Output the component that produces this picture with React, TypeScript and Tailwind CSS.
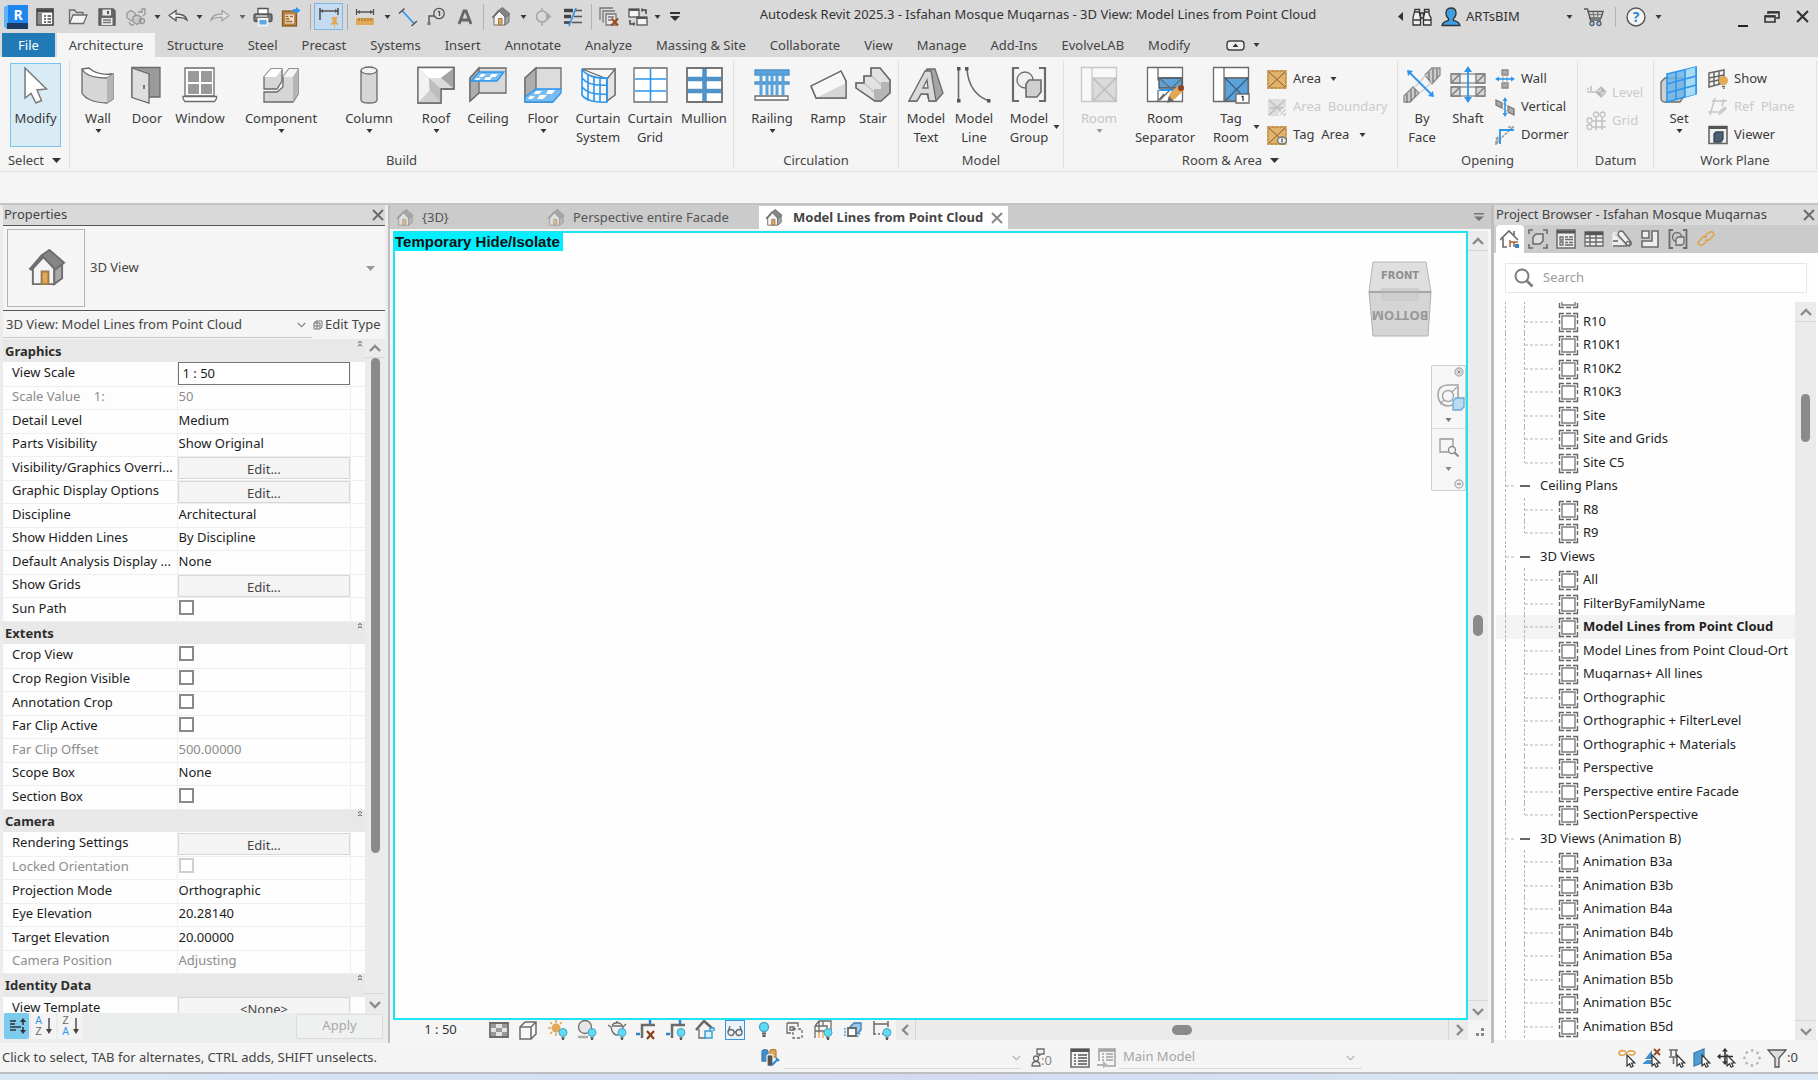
import type { ReactNode } from "react";

type IconProps = { children: ReactNode; size?: number; h?: number; className?: string };

// Small icons share a 20x20 grid, ribbon icons a 38x38 one
function Ico({ children, size = 20, h, className = "" }: IconProps) {
    return (
        <svg
            width={size}
            height={h ?? size}
            viewBox={`0 0 ${size} ${h ?? size}`}
            fill="none"
            stroke="#6b6b6b"
            strokeWidth="1.3"
            aria-hidden="true"
            className={`shrink-0 ${className}`}
        >
            {children}
        </svg>
    );
}

function Big({ children }: { children: ReactNode }) {
    return <Ico size={38}>{children}</Ico>;
}

function Caret({ className = "text-[#3a3a3a]" }: { className?: string }) {
    return (
        <svg width="7" height="4" viewBox="0 0 7 4" fill="currentColor" aria-hidden="true" className={`shrink-0 ${className}`}>
            <path d="M.5 0h6L3.5 4z" />
        </svg>
    );
}

function Chevron({ dir, className = "text-[#8a8a8a]", small = false }: { dir: "up" | "down" | "left" | "right"; className?: string; small?: boolean }) {
    const d = {
        up: "M1 9l5-5 5 5",
        down: "M1 4l5 5 5-5",
        left: "M8 1L3 6l5 5",
        right: "M4 1l5 5-5 5",
    }[dir];
    return (
        <svg width={small ? 9 : 12} height={small ? 9 : 12} viewBox="0 0 12 12" fill="none" stroke="currentColor" strokeWidth={small ? 1.6 : 2.4} aria-hidden="true" className={`shrink-0 ${className}`}>
            <path d={d} />
        </svg>
    );
}

function Cross({ size = 12, className = "text-[#6b6b6b]" }: { size?: number; className?: string }) {
    return (
        <svg width={size} height={size} viewBox="0 0 12 12" fill="none" stroke="currentColor" strokeWidth="2" aria-hidden="true" className={className}>
            <path d="M1 1l10 10M11 1L1 11" />
        </svg>
    );
}

const HouseIcon = ({ size = 20, faded = false }: { size?: number; faded?: boolean }) => (
    <svg width={size} height={size} viewBox="0 0 20 20" fill="none" stroke="#6f6f6f" strokeWidth="1" aria-hidden="true" className={faded ? "shrink-0 opacity-50" : "shrink-0"}>
        <path d="M3 10v8h11V10L8.500 4z" fill="#f4f4f4" />
        <path d="M14 10v8l4-3V8z" fill="#a8a8a8" />
        <path d="M1.500 10.500L8 3l3.500-2.500L19 7l-4.500 3.500L8 3.800z" fill="#858585" />
        <path d="M8 3.200L1.500 10.800" strokeWidth="1.600" />
        <path d="M7.500 18v-6.500H11V18z" fill="#e2a855" stroke="#9a7a4a" />
    </svg>
);

const Bulb = () => (
    <>
        <circle cx="15" cy="12.500" r="4" fill="#5fdcf2" stroke="#4aa3c4" strokeWidth="1" />
        <path d="M13.500 18h3M14 19.500h2" stroke="#555" strokeWidth="1.600" />
    </>
);

const CursorMark = () => <path d="M10 7v11l2.500-2.200 1.600 3.400 2-1-1.600-3.200h3.300z" fill="#fff" stroke="#333" strokeWidth="1.200" />;

/* ---------- title bar ---------- */

const iconTemplate = (
    <Ico>
        <rect x="2" y="2" width="16" height="16" fill="#fff" stroke="#444" strokeWidth="1.600" />
        <path d="M2 4h16" stroke="#444" strokeWidth="3" />
        <path d="M3 6h4v11H3z" fill="#8a8a8a" stroke="none" />
        <path d="M9 9h2M12.500 9H16M9 12h2M12.500 12H16M9 15h2M12.500 15H16" stroke="#444" />
    </Ico>
);
const iconOpen = (
    <Ico>
        <path d="M1.500 16.500V3h5l2 2.500H15V8" />
        <path d="M1.500 16.500L5 8h14l-3.500 8.500z" fill="#f4f4f4" />
    </Ico>
);
const iconSave = (
    <Ico>
        <path d="M2 2h14l2 2v14H2z" fill="#666" stroke="#555" />
        <path d="M5.500 2.500h8.500v6H5.500z" fill="#e9e9e9" stroke="none" />
        <path d="M11 4v3" stroke="#444" strokeWidth="1.800" />
        <path d="M4.500 11h11v7h-11z" fill="#e9e9e9" stroke="none" />
        <path d="M6 13h8M6 15.500h8" stroke="#777" />
    </Ico>
);
const iconSync = (
    <Ico className="opacity-60">
        <path d="M1 6l4-2.500L9 6v5l-4 2.500L1 11z" fill="#d0d0d0" />
        <path d="M7 10l4-2 4 2v5l-4 2.500L7 15z" fill="#bdbdbd" />
        <path d="M12 5h4V2h3v5l-2 2M3 15l2 3h3" />
        <circle cx="16" cy="14" r="2.500" />
    </Ico>
);
const iconUndo = (
    <Ico>
        <path d="M1 8.500L8 3.500V7c6 0 10 2 11 6-3-2.500-6-3-11-2.500v3.300z" fill="#f2f2f2" stroke="#555" />
    </Ico>
);
const iconRedo = (
    <Ico className="opacity-40">
        <path d="M19 8.500L12 3.500V7C6 7 2 9 1 13c3-2.500 6-3 11-2.500v3.300z" fill="#f2f2f2" stroke="#555" />
    </Ico>
);
const iconPrint = (
    <Ico>
        <path d="M5 7V1.500h10V7" fill="#fff" stroke="#555" />
        <rect x="1" y="7" width="18" height="7.500" rx="1.500" fill="#777" stroke="#555" />
        <path d="M3 9h11" stroke="#ddd" />
        <path d="M5.500 12h9v6.500h-9z" fill="#5ba9e6" stroke="#f4f4f4" strokeWidth="1.800" />
    </Ico>
);
const iconExport = (
    <Ico>
        <rect x="1.500" y="4" width="14" height="15" fill="#b98242" stroke="#8b5a22" />
        <path d="M4 7.500h9v9H4z" fill="#f3e7d3" stroke="none" />
        <path d="M4.500 9.500h3M9 9.500h3M4.500 12h4M4.500 14.500h7" stroke="#a06a2c" />
        <path d="M10 4.500c1-2 3-2.500 5-2.500V0l4.500 3.500L15 7V5c-2-.3-3.500-.3-5-.5z" fill="#2c95ee" stroke="none" />
    </Ico>
);
const iconDimPin = (
    <Ico size={22}>
        <path d="M2 2v12M20 2v7M2 5h18" stroke="#555" strokeWidth="1.600" />
        <path d="M5 3L2 5l3 2zM17 3l3 2-3 2z" fill="#555" stroke="none" />
        <path d="M13 11h7l-1.500 2v3l2.500 2.500H12l2.500-2.500v-3zM16 19h1v3h-1z" fill="#e2a855" stroke="none" />
    </Ico>
);
const iconMeasure = (
    <Ico>
        <path d="M1.500 2v6M18.500 2v6M2 5h16" stroke="#555" />
        <path d="M5 3L2 5l3 2zM15 3l3 2-3 2z" fill="#555" stroke="none" />
        <path d="M1 11h18v7H1z" fill="#e2a855" stroke="none" />
        <path d="M4 11v3M7 11v3M10 11v3M13 11v3M16 11v3" stroke="#8b6a35" strokeWidth="1" />
    </Ico>
);
const iconAlign = (
    <Ico>
        <path d="M4 3.500l12 13" stroke="#3595e8" strokeWidth="1.800" />
        <path d="M1 6.500l5.500-5M13.500 19l5.500-5" stroke="#555" strokeWidth="1.600" />
    </Ico>
);
const iconTag = (
    <Ico>
        <circle cx="13" cy="6.500" r="5.200" stroke="#555" />
        <path d="M13.500 4v5M12 5l1.500-1" stroke="#555" strokeWidth="1.400" />
        <path d="M8 9H3v7" stroke="#555" strokeWidth="1.400" />
        <rect x="1.500" y="15" width="3" height="3" fill="#777" stroke="none" />
    </Ico>
);
const iconText = (
    <Ico>
        <path d="M4 17L9 4h2l5 13M6 13h8" stroke="#666" strokeWidth="2.800" />
    </Ico>
);
const iconSection = (
    <Ico>
        <circle cx="9" cy="9.500" r="5.500" stroke="#a8a8a8" strokeWidth="1.600" />
        <path d="M13 4.500l5.500 5-5.500 5z" fill="#a8a8a8" stroke="none" />
        <path d="M9 1v3M9 15v4" stroke="#a8a8a8" strokeWidth="1.600" />
    </Ico>
);
const iconThin = (
    <Ico>
        <path d="M1 3.500h9M1 9.500h7" stroke="#444" strokeWidth="3.600" />
        <path d="M1 15.500h6" stroke="#444" strokeWidth="2.600" />
        <path d="M13 3.500h6M11 9.500h8M9 15.500h10" stroke="#555" strokeWidth="1.300" />
        <path d="M13 1L6 19" stroke="#3595e8" strokeWidth="1.800" />
    </Ico>
);
const iconCloseHidden = (
    <Ico>
        <path d="M1 13V1h13M4 15.500V4h12" stroke="#777" />
        <path d="M7 7h10v11H7z" fill="#e8e8e8" stroke="#777" />
        <path d="M9 10h6M9 13h3" stroke="#777" />
        <path d="M12.500 11.500l6.500 7M19 11.500l-6.500 7" stroke="#9c4a1f" strokeWidth="2.200" />
    </Ico>
);
const iconSwitch = (
    <Ico>
        <rect x="1" y="2" width="10" height="8" fill="#f4f4f4" stroke="#555" />
        <rect x="9" y="10" width="10" height="8" fill="#f4f4f4" stroke="#555" />
        <path d="M1 3h10M9 11h10" stroke="#555" strokeWidth="2" />
        <path d="M14 3h4v4M14 1.500v3M6 17H2v-4M6 15.500v3" stroke="#444" strokeWidth="1.500" />
    </Ico>
);

type QatItem = { icon: ReactNode; label: string; w: string };

const caret = <Caret />;

const qatLeft: QatItem[] = [
    { icon: iconTemplate, label: "Home", w: "w-[30px]" },
    { icon: iconOpen, label: "Open", w: "w-[36px]" },
    { icon: iconSave, label: "Save", w: "w-[22px]" },
    { icon: iconSync, label: "Synchronize", w: "w-[36px]" },
    { icon: caret, label: "Synchronize options", w: "w-[6px]" },
    { icon: iconUndo, label: "Undo", w: "w-[36px]" },
    { icon: caret, label: "Undo history", w: "w-[6px]" },
    { icon: iconRedo, label: "Redo", w: "w-[36px]" },
    { icon: <Caret className="text-[#666]" />, label: "Redo history", w: "w-[8px]" },
    { icon: iconPrint, label: "Print", w: "w-[34px]" },
    { icon: iconExport, label: "Export", w: "w-[22px]" },
];
const qatMiddle: QatItem[] = [
    { icon: iconMeasure, label: "Measure", w: "w-[34px]" },
    { icon: caret, label: "Measure options", w: "w-[10px]" },
    { icon: iconAlign, label: "Aligned dimension", w: "w-[32px]" },
    { icon: iconTag, label: "Tag by category", w: "w-[24px]" },
    { icon: iconText, label: "Text", w: "w-[34px]" },
];
const qatViews: QatItem[] = [
    { icon: <HouseIcon />, label: "Default 3D view", w: "w-[34px]" },
    { icon: caret, label: "3D view options", w: "w-[10px]" },
    { icon: iconSection, label: "Section", w: "w-[30px]" },
    { icon: iconThin, label: "Thin lines", w: "w-[30px]" },
];
const qatWindows: QatItem[] = [
    { icon: iconCloseHidden, label: "Close inactive views", w: "w-[34px]" },
    { icon: iconSwitch, label: "Switch windows", w: "w-[24px]" },
    { icon: caret, label: "Switch windows options", w: "w-[14px]" },
    {
        icon: (
            <svg width="10" height="9" viewBox="0 0 10 9" fill="#333" aria-hidden="true" className="shrink-0">
                <path d="M0 0h10v2H0zM0 4h10L5 9z" />
            </svg>
        ),
        label: "Customize quick access",
        w: "w-[22px]",
    },
];

function QatGroup({ items }: { items: QatItem[] }) {
    return (
        <>
            {items.map((it) => (
                <button key={it.label} type="button" aria-label={it.label} className={`flex h-8 shrink-0 items-center justify-center ${it.w}`}>
                    {it.icon}
                </button>
            ))}
        </>
    );
}

function TitleBar() {
    return (
        <header className="flex h-[33px] items-center pl-0.5">
            <button type="button" aria-label="Revit" className="flex w-[28px] shrink-0 justify-center">
                <svg width="26" height="26" viewBox="0 0 26 26" aria-hidden="true">
                    <path d="M1 3l4-2h20v24H4l-3-2z" fill="#5fb2f5" />
                    <path d="M5 1h20v18H5z" fill="#1f86f0" />
                    <path d="M4 19h21v6H4z" fill="#1b3a66" />
                    <text x="15" y="15.500" textAnchor="middle" fontSize="14" fontWeight="bold" fill="#fff" fontFamily="Open Sans, sans-serif">R</text>
                </svg>
            </button>
            <QatGroup items={qatLeft} />
            <span className="mr-[3px] ml-2 h-[26px] w-px bg-[#a9a9a9]" />
            <button type="button" aria-label="Pinned dimension" className="flex h-[27px] w-[29px] items-center justify-center border border-[#7db7e4] bg-[#c5dcf0]">
                {iconDimPin}
            </button>
            <span className="ml-1 h-[26px] w-px bg-[#a9a9a9]" />
            <QatGroup items={qatMiddle} />
            <span className="ml-px h-[26px] w-px bg-[#b3b3b3]" />
            <QatGroup items={qatViews} />
            <span className="ml-[3px] h-[26px] w-px bg-[#b3b3b3]" />
            <QatGroup items={qatWindows} />
            <h1 className="min-w-0 flex-1 pr-1 pb-1 text-center text-[13px] whitespace-nowrap text-[#333]">
                Autodesk Revit 2025.3 - Isfahan Mosque Muqarnas - 3D View: Model Lines from Point Cloud
            </h1>
            <div className="flex w-[424px] shrink-0 items-center">
                <button type="button" aria-label="Collapse search" className="flex w-3 justify-center">
                    <svg width="5" height="9" viewBox="0 0 5 9" fill="#333" aria-hidden="true"><path d="M5 0v9L0 4.500z" /></svg>
                </button>
                <button type="button" aria-label="Search" className="flex w-8 justify-center">
                    <Ico>
                        <path d="M3 2.500h4.500V7l1 3v8H1v-7zM12.500 2.500H17V7l2 4v7h-7.500v-8l1-3z" fill="#f0f0f0" stroke="#333" />
                        <path d="M8.500 6h3v5h-3zM1.500 13h7M11.500 13H19M3 5h4.500M12.500 5H17" stroke="#333" />
                    </Ico>
                </button>
                <button type="button" aria-label="Account" className="flex w-[26px] justify-center">
                    <Ico>
                        <path d="M10 1c3.500 0 5 2 5 5 0 2.500-1 4.500-2.500 5.500v1.800c4 1 6 2 6.500 5.200H1c.5-3.200 2.500-4.200 6.500-5.200v-1.800C6 10.500 5 8.500 5 6c0-3 1.500-5 5-5z" fill="#3f9fe3" stroke="#333" />
                    </Ico>
                </button>
                <button type="button" className="flex w-[109px] items-center justify-between pl-0.5 text-[13px] text-[#333]">
                    ARTsBIM
                    <Caret />
                </button>
                <button type="button" aria-label="App store" className="flex w-[42px] justify-center">
                    <Ico>
                        <path d="M0 2h3.500l3 11H17M4 4.500h15L17 11H6" fill="#f0f0f0" stroke="#555" strokeWidth="1.500" />
                        <path d="M6 7.500h12M9 4.500l1 6M14 4.500l-.5 6" stroke="#777" />
                        <circle cx="8" cy="16.500" r="2" stroke="#46617e" />
                        <circle cx="15" cy="16.500" r="2" stroke="#46617e" />
                    </Ico>
                </button>
                <span className="h-5 w-px bg-[#b3b3b3]" />
                <button type="button" aria-label="Help" className="flex w-[39px] justify-center">
                    <svg width="20" height="20" viewBox="0 0 20 20" aria-hidden="true">
                        <circle cx="10" cy="10" r="9" fill="#f4f4f4" stroke="#555" strokeWidth="1.400" />
                        <text x="10" y="15" textAnchor="middle" fontSize="14" fontWeight="bold" fill="#2b87cf" fontFamily="Open Sans, sans-serif">?</text>
                    </svg>
                </button>
                <button type="button" aria-label="Help options"><Caret /></button>
                <div className="ml-auto flex items-center">
                    <button type="button" aria-label="Minimize" className="flex h-5 w-[29px] items-end justify-center">
                        <span className="h-0.5 w-[10px] bg-[#222]" />
                    </button>
                    <button type="button" aria-label="Restore" className="flex w-[30px] justify-center">
                        <Ico size={16}>
                            <path d="M4 5V3h11v6h-3M1 7h10v6H1z" stroke="#333" strokeWidth="1.600" />
                            <path d="M4 3.500h11M1 7.500h10" stroke="#333" strokeWidth="2" />
                        </Ico>
                    </button>
                    <button type="button" aria-label="Close" className="flex w-[31px] justify-center"><Cross size={13} className="text-[#333]" /></button>
                </div>
            </div>
        </header>
    );
}

const ribbonTabs = [
    "Structure", "Steel", "Precast", "Systems", "Insert", "Annotate", "Analyze", "Massing & Site",
    "Collaborate", "View", "Manage", "Add-Ins", "EvolveLAB", "Modify",
];

function RibbonTabs() {
    return (
        <nav className="flex h-6 items-stretch pl-0.5 text-[13px] text-[#444]">
            <button type="button" className="mr-0.5 w-[53px] bg-[#1f7ab5] pt-0.5 text-white">File</button>
            <button type="button" className="w-[98px] bg-[#f5f5f5] pt-0.5">Architecture</button>
            {ribbonTabs.map((t) => (
                <button key={t} type="button" className="px-3 pt-0.5 whitespace-nowrap">{t}</button>
            ))}
            <button type="button" aria-label="Ribbon display" className="ml-6 flex items-center gap-2">
                <svg width="19" height="11" viewBox="0 0 19 11" fill="none" stroke="#444" strokeWidth="1.400" aria-hidden="true">
                    <rect x="1" y="1" width="17" height="9" rx="3" fill="#f0f0f0" />
                    <path d="M6.500 7h6l-3-3.500z" fill="#333" stroke="none" />
                </svg>
                <Caret />
            </button>
        </nav>
    );
}

/* ---------- ribbon icons ---------- */

const hatch = "#8a8a8a";

const bigIcons = {
    modify: (
        <Big><path d="M8 2l21.500 21-9.500 1 4.500 10.500-5.500 2.500-5-9.500L8 32z" fill="#fff" stroke="#7a7a7a" strokeWidth="1.500" /></Big>
    ),
    wall: (
        <Big>
            <path d="M3 3c2 5 20 7 31 5v25l-6 4C16 37 6 33 3 27z" fill="#d6d6d6" />
            <path d="M3 3l7-1c5 5 14 7 24 6l-6 4C16 12 6 9 3 3z" fill="#fff" />
            <path d="M28 12l6-4v25l-6 4z" fill="#b5b5b5" stroke="none" />
        </Big>
    ),
    door: (
        <Big>
            <path d="M4 1.500h28V31H4z" fill="#9a9a9a" />
            <path d="M4 2l17 6v29L4 31.500z" fill="#dedede" />
            <path d="M16 19v4" stroke="#555" strokeWidth="1.500" />
        </Big>
    ),
    window: (
        <Big>
            <path d="M4 2h29v28H4z" fill="#fff" />
            <path d="M7 5h11v11H7zM20 5h11v11H20zM7 18h11v10H7zM20 18h11v10H20z" fill="#999" stroke="none" />
            <path d="M2 30.500h33.500v2l-2 3H4l-2-3z" fill="#fff" />
        </Big>
    ),
    component: (
        <Big>
            <path d="M2 11l7-8h11v12l-5 8H2z" fill="#d6d6d6" />
            <path d="M9 3h11l-6 8H2z" fill="#fff" stroke="none" />
            <path d="M21 11l6-8h9v25l-5 8H2V26h13l6-5z" fill="#d6d6d6" />
            <path d="M27 3h9l-5 8H21z" fill="#f4f4f4" stroke="none" />
            <path d="M31 11l5-8v25l-5 8z" fill="#b5b5b5" stroke="none" />
        </Big>
    ),
    column: (
        <Big>
            <path d="M11 5v29c0 4 16 4 16 0V5z" fill="#d6d6d6" />
            <ellipse cx="19" cy="4.500" rx="8" ry="3.500" fill="#f2f2f2" />
        </Big>
    ),
    roof: (
        <Big>
            <path d="M1 1.500h36V23H24v14H1z" fill="#dcdcdc" />
            <path d="M1 1.500h36L24 12H12z" fill="#fff" stroke="none" />
            <path d="M37 2L24 12l13 11zM1 2l11 11v12L1 37z" fill="#f2f2f2" stroke="none" />
            <path d="M12 12l12 11v14H1l12-12z" fill="#bdbdbd" stroke="none" />
            <path d="M24 12l13-10v21z" fill="#a5a5a5" stroke="none" />
            <path d="M1 37l12-13 11 13z" fill="#cfcfcf" stroke="none" />
            <path d="M1 1.500h36V23H24v14H1z" />
        </Big>
    ),
    ceiling: (
        <Big>
            <path d="M1 12l9-10h27v25H10L1 35z" fill="#d8d8d8" />
            <path d="M1 12l9-10v25l-9 8z" fill="#adadad" />
            <path d="M2 15l8-9h25l-7 9z" fill="#7bbcf0" stroke="#2c95ee" />
            <path d="M12 8h5l-3 3h-4zM22 8h7l-3 3h-5zM7 12h5l-2 2H6zM17 11h6l-2 3h-6z" fill="#fff" stroke="none" />
        </Big>
    ),
    floor: (
        <Big>
            <path d="M1 12l11-10h25v21L28 36H1z" fill="#dcdcdc" />
            <path d="M1 12l11-10v21L1 33z" fill="#adadad" />
            <path d="M12 23h25v4l-8 9H1v-5z" fill="#7bbcf0" stroke="#2c95ee" />
            <path d="M12 25h6l-3 3h-5zM24 24h7l-3 4h-6zM6 30h5l-3 3H4zM16 29h7l-4 4h-6z" fill="#fff" stroke="none" />
        </Big>
    ),
    curtainSystem: (
        <Big>
            <path d="M3 3h33v26l-8 6V13z" fill="#f7f7f7" />
            <path d="M28 13l8-10v26l-8 6z" fill="#e3e3e3" />
            <path d="M3 3c3 6 14 10 25 9v24C16 37 6 34 3 29zM3 12c5 6 15 8 25 7M3 21c5 6 15 8 25 7M9 9v25M15 11v24M21 12v24" stroke="#2c95ee" strokeWidth="1.600" />
        </Big>
    ),
    curtainGrid: (
        <Big>
            <path d="M3 2h33v34H3z" fill="#fff" />
            <path d="M19.500 3v32M4 13h31M4 25h31" stroke="#2c95ee" strokeWidth="1.600" />
        </Big>
    ),
    mullion: (
        <Big>
            <path d="M2 2h35v34H2z" fill="#fff" />
            <path d="M19.500 2v34M3 13h33M3 25h33" stroke="#4f93c8" strokeWidth="4.500" />
            <path d="M2 2h35v34H2z" />
        </Big>
    ),
    railing: (
        <Big>
            <path d="M2 4h34v5H2zM2 16h34v2H2z" fill="#5ba3dc" stroke="#4f93c8" />
            <path d="M8 9v20M14 9v20M19 9v20M24 9v20M30 9v20" stroke="#5ba3dc" strokeWidth="3" />
            <path d="M2 30h33v4H2z" fill="#fff" />
        </Big>
    ),
    ramp: (
        <Big>
            <path d="M2 20L32 5l5 10v17H7z" fill="#f7f7f7" />
            <path d="M7 32l30-15v15z" fill="#d6d6d6" stroke="none" />
            <path d="M2 20L32 5l5 10v17H7z" />
        </Big>
    ),
    stair: (
        <Big>
            <path d="M2 17h8v-7h7V2h9l10 12v13l-9 8h-6L2 22z" fill="#e2e2e2" />
            <path d="M20 31v-8h7v-7h8v11l-9 8h-5z" fill="#b5b5b5" stroke="none" />
            <path d="M2 17h8l10 9M10 10h8l9 9M17 2h9l9 11" stroke="#c4c4c4" />
            <path d="M2 17h8v-7h7V2h9l10 12v13l-9 8h-6L2 22z" />
        </Big>
    ),
    modelText: (
        <Big>
            <path d="M2 35L20 3h8l8 24-7 8h-7l-2-7h-6l-4 7z" fill="#a5a5a5" />
            <path d="M2 35L18 5h6l5 30h-7l-1-7h-7l-4 7z" fill="#dadada" />
            <path d="M16 22l4-8 1 8z" fill="#f5f5f5" />
        </Big>
    ),
    modelLine: (
        <Big>
            <path d="M3.500 3v31M12 3c1 14 6 26 22 32" strokeWidth="1.600" />
            <path d="M2 1h3.500v3.500H2zM10 1h3.500v3.500H10zM2 33h3.500v3.500H2zM32 33h3.500v3.500H32z" fill="#555" stroke="none" />
        </Big>
    ),
    modelGroup: (
        <Big>
            <path d="M9 2H3v33h6M29 2h6v33h-6" strokeWidth="2.200" />
            <circle cx="15" cy="14" r="8" fill="#f0f0f0" />
            <path d="M16 18l3-4h12v12l-4 5H16z" fill="#cfcfcf" strokeWidth="1.600" />
        </Big>
    ),
    room: (
        <Big>
            <path d="M1.500 1.500h35v34h-35zM12 1.500v34" fill="#f8f8f8" stroke="#c8c8c8" />
            <path d="M13 12h23v23H13z" fill="#dadada" stroke="#c8c8c8" />
            <path d="M13 12l23 23M36 12L13 35" stroke="#bbb" />
        </Big>
    ),
    roomSeparator: (
        <Big>
            <path d="M1.500 1.500h35v34h-35z" fill="#fff" />
            <path d="M12 1.500v13M12 24v11M12 12h24" />
            <path d="M13 12h23v10H13z" fill="#5ba3dc" stroke="#555" />
            <path d="M13 12l16 14M36 12L14 34M12 35l6-7" />
            <path d="M13 24h17" stroke="#2c95ee" strokeWidth="2" />
            <path d="M21 36l3-9 9-8 5 5-9 9z" fill="#e2a855" stroke="none" />
            <path d="M21 37l2-7 5 5z" fill="#666" stroke="none" />
            <circle cx="35" cy="22" r="3" fill="#8b4526" stroke="none" />
        </Big>
    ),
    tagRoom: (
        <Big>
            <path d="M1.500 1.500h35v34h-35z" fill="#fff" />
            <path d="M12 1.500v34M12 12h24" />
            <path d="M13 12h23v23H13z" fill="#5ba3dc" />
            <path d="M13 12l23 23M36 12L13 35" stroke="#3f5f7e" />
            <path d="M24 28h13v9H24z" fill="#fff" />
            <path d="M31 30v5M29.500 31l1.500-1" stroke="#333" />
        </Big>
    ),
    byFace: (
        <Big>
            <path d="M1 30l9-9 6 6-9 9H1zM22 9l7-7h8v7l-8 9z" fill="#cdcdcd" stroke={hatch} />
            <path d="M4 28v9M8 24v12M12 23v8M26 6v8M30 3v13M34 3v9" stroke="#777" />
            <path d="M12 21l11-12M17 27l12-11" stroke="#ccc" />
            <path d="M7 7l22 22" stroke="#2c95ee" strokeWidth="1.800" />
            <path d="M4 4l6 1-5 5zM31 31l-6-1 5-5z" fill="#2c95ee" stroke="none" />
        </Big>
    ),
    shaft: (
        <Big>
            <path d="M2 8h34M2 17h34M2 21h34M2 30h34" stroke="#999" />
            <path d="M2 8h9v9H2zM27 8h9v9h-9zM2 21h9v9H2zM27 21h9v9h-9z" fill="#d6d6d6" stroke="#777" />
            <path d="M3 16l7-7M28 16l7-7M3 29l7-7M28 29l7-7" stroke="#777" />
            <path d="M19 5v28" stroke="#2c95ee" strokeWidth="1.800" />
            <path d="M19 0l4 6h-8zM19 37l4-6h-8z" fill="#2c95ee" stroke="none" />
        </Big>
    ),
    set: (
        <Big>
            <path d="M1 16l4-4h19v18l-4 6H5c-3 0-4-2-4-4z" fill="#cfcfcf" />
            <path d="M7 8l29-7v27L7 36z" fill="#6db4e2" fillOpacity="0.850" stroke="#2c95ee" strokeWidth="1.600" />
            <path d="M25 4l11-3v27l-11 3z" fill="#a9dcf2" stroke="none" />
            <path d="M16 6v28M25 4v28M7 18l29-8M7 27l29-8M36 1v27" stroke="#2c95ee" strokeWidth="1.600" />
        </Big>
    ),
};

const areaBase = (
    <>
        <path d="M1 2h18v17H1z" fill="#e4b36a" stroke="#c99343" />
        <path d="M2 3l16 15M18 3L2 18" stroke="#7a5c38" strokeWidth="1" />
        <path d="M1 2h18v17H1z" stroke="#b7904f" strokeDasharray="2 2" />
    </>
);

const smallIcons = {
    area: <Ico>{areaBase}</Ico>,
    areaBoundary: (
        <Ico>
            <path d="M1 2h18v17H1z" fill="#dedede" stroke="none" />
            <path d="M2 3l16 15M18 3L2 18M3 11h14" stroke="#bdbdbd" />
            <path d="M12 17l6-6 2 2-6 6z" fill="#c8c8c8" stroke="#f5f5f5" />
        </Ico>
    ),
    tagArea: (
        <Ico>
            {areaBase}
            <ellipse cx="15" cy="15.500" rx="4.500" ry="3.500" fill="#eee" stroke="#777" strokeWidth="1.500" />
            <path d="M15 13.500v4" stroke="#555" />
        </Ico>
    ),
    openingWall: (
        <Ico>
            <path d="M7 1h6v5H7zM7 14h6v5H7z" fill="#aaa" stroke="#888" />
            <path d="M8 6v8M12 6v8" stroke="#bbb" />
            <path d="M3 10h14" stroke="#2c95ee" strokeWidth="1.600" />
            <path d="M0 10l4-2.500v5zM20 10l-4-2.500v5z" fill="#2c95ee" stroke="none" />
        </Ico>
    ),
    openingVertical: (
        <Ico>
            <path d="M1 3l6 3v5L1 8zM13 9l6 3v6l-6-3z" fill="#aaa" stroke="#777" />
            <path d="M7 11l6 4M7 6l6 3" stroke="#bbb" />
            <path d="M10 3v14" stroke="#2c95ee" strokeWidth="1.600" />
            <path d="M10 0l2.500 4h-5zM10 20l2.500-4h-5z" fill="#2c95ee" stroke="none" />
        </Ico>
    ),
    dormer: (
        <Ico>
            <path d="M1 18L18 2M1 14l3-3M13 2h6M1 19v-4l4-3v4z" stroke="#999" strokeDasharray="3 1" strokeWidth="1.600" />
            <path d="M5 19V5h14" stroke="#2c95ee" strokeWidth="1.800" />
        </Ico>
    ),
    level: (
        <Ico className="opacity-70">
            <path d="M1 6h2M5 8V3M1 9h9" stroke="#aaa" strokeWidth="1.600" />
            <path d="M15 4l5 5-5 5-5-5z" fill="#ccc" stroke="#aaa" />
            <path d="M15 4v5h5zM15 14V9h-5z" fill="#999" stroke="none" />
        </Ico>
    ),
    grid: (
        <Ico>
            <path d="M10 7v12M16 7v12M6 10h14M6 16h14" stroke="#c2c2c2" strokeWidth="1.600" />
            <circle cx="10" cy="3.500" r="2.500" stroke="#c2c2c2" />
            <circle cx="16.500" cy="3.500" r="2.500" stroke="#c2c2c2" />
            <circle cx="3.500" cy="9.500" r="2.500" stroke="#c2c2c2" />
            <circle cx="3.500" cy="16" r="2.500" stroke="#c2c2c2" />
        </Ico>
    ),
    show: (
        <Ico>
            <path d="M1 4l15-3v13L1 18zM6 3v14M11 2v14M1 9l15-3M1 13l15-3" stroke="#666" strokeWidth="1.500" />
            <circle cx="15.500" cy="11.500" r="4.500" fill="#e2a855" stroke="none" />
            <path d="M14 17.500h3M15 19.500h1.500" stroke="#666" strokeWidth="1.600" />
        </Ico>
    ),
    refPlane: (
        <Ico>
            <path d="M7 1L2 18M4 4h15M16 2l-2 7M0 15h10" stroke="#c6c6c6" strokeWidth="1.500" />
            <path d="M10 18l1-4 6-5 2 3-6 5z" fill="#ccc" stroke="none" />
        </Ico>
    ),
    viewer: (
        <Ico>
            <path d="M1 1.500h18v17H1z" fill="#f0f0f0" stroke="#666" strokeWidth="1.600" />
            <path d="M1 2.500h18" stroke="#555" strokeWidth="3" />
            <path d="M6 9l2-2h7v7l-2 3H6z" fill="#4c5f73" stroke="#39485a" />
        </Ico>
    ),
};

function RibbonButton({ icon, lines, w, arrow, side, disabled }: { icon: ReactNode; lines: string[]; w: string; arrow?: boolean; side?: boolean; disabled?: boolean }) {
    return (
        <button type="button" disabled={disabled} className={`relative flex shrink-0 flex-col items-center pt-[5px] ${w} ${disabled ? "text-[#c4c4c4]" : "text-[#3a3a3a]"}`}>
            {icon}
            <span className="mt-[5px] flex flex-col text-center leading-[19px] whitespace-nowrap">
                {lines.map((l) => <span key={l}>{l}</span>)}
            </span>
            {arrow && <Caret className={disabled ? "mt-px text-[#999]" : "mt-px text-[#333]"} />}
            {side && <span className="absolute top-[64px] -right-px"><Caret /></span>}
        </button>
    );
}

function SmallButton({ icon, label, arrow, disabled }: { icon: ReactNode; label: string; arrow?: boolean; disabled?: boolean }) {
    return (
        <button type="button" disabled={disabled} className={`flex h-7 items-center gap-1.5 whitespace-pre ${disabled ? "text-[#cacaca]" : "text-[#3a3a3a]"}`}>
            {icon}
            <span>{label}</span>
            {arrow && <Caret />}
        </button>
    );
}

function Panel({ title, w, pad = "", arrow, children }: { title: string; w: string; pad?: string; arrow?: boolean; children: ReactNode }) {
    return (
        <section className={`flex shrink-0 flex-col border-r border-[#e0e0e0] ${w}`}>
            <div className={`flex h-[91px] items-start ${pad}`}>{children}</div>
            <div className="flex items-center justify-center gap-2 leading-[18px] text-[#444]">
                {title}
                {arrow && (
                    <svg width="9" height="5" viewBox="0 0 9 5" fill="#333" aria-hidden="true"><path d="M0 0h9L4.500 5z" /></svg>
                )}
            </div>
        </section>
    );
}

function Ribbon() {
    return (
        <div className="flex h-[115px] border-b border-[#e0e0e0] bg-[#f5f5f5] pt-1 pb-0.5 text-[13px]">
            <Panel title="Select" w="w-[70px]" pad="pl-[10px] pt-[2px]" arrow>
                <button type="button" className="flex h-[84px] w-[51px] flex-col items-center border border-[#7cc4ee] bg-[#d9ecf5] pt-0.5 text-[#3a3a3a]">
                    {bigIcons.modify}
                    <span className="mt-[5px] leading-[19px]">Modify</span>
                </button>
            </Panel>
            <Panel title="Build" w="w-[664px]" pad="pl-[3px]">
                <RibbonButton icon={bigIcons.wall} lines={["Wall"]} w="w-[50px]" arrow />
                <RibbonButton icon={bigIcons.door} lines={["Door"]} w="w-[48px]" />
                <RibbonButton icon={bigIcons.window} lines={["Window"]} w="w-[58px]" />
                <RibbonButton icon={bigIcons.component} lines={["Component"]} w="w-[104px]" arrow />
                <RibbonButton icon={bigIcons.column} lines={["Column"]} w="w-[72px]" arrow />
                <RibbonButton icon={bigIcons.roof} lines={["Roof"]} w="w-[62px]" arrow />
                <RibbonButton icon={bigIcons.ceiling} lines={["Ceiling"]} w="w-[42px]" />
                <RibbonButton icon={bigIcons.floor} lines={["Floor"]} w="w-[68px]" arrow />
                <RibbonButton icon={bigIcons.curtainSystem} lines={["Curtain", "System"]} w="w-[42px]" />
                <RibbonButton icon={bigIcons.curtainGrid} lines={["Curtain", "Grid"]} w="w-[62px]" />
                <RibbonButton icon={bigIcons.mullion} lines={["Mullion"]} w="w-[46px]" />
            </Panel>
            <Panel title="Circulation" w="w-[165px]" pad="pl-[11px]">
                <RibbonButton icon={bigIcons.railing} lines={["Railing"]} w="w-[54px]" arrow />
                <RibbonButton icon={bigIcons.ramp} lines={["Ramp"]} w="w-[58px]" />
                <RibbonButton icon={bigIcons.stair} lines={["Stair"]} w="w-[32px]" />
            </Panel>
            <Panel title="Model" w="w-[165px]" pad="pl-1">
                <RibbonButton icon={bigIcons.modelText} lines={["Model", "Text"]} w="w-[46px]" />
                <RibbonButton icon={bigIcons.modelLine} lines={["Model", "Line"]} w="w-[50px]" />
                <RibbonButton icon={bigIcons.modelGroup} lines={["Model", "Group"]} w="w-[60px]" side />
            </Panel>
            <Panel title="Room & Area" w="w-[334px]" pad="pl-[7px]" arrow>
                <RibbonButton icon={bigIcons.room} lines={["Room"]} w="w-[56px]" arrow disabled />
                <RibbonButton icon={bigIcons.roomSeparator} lines={["Room", "Separator"]} w="w-[76px]" />
                <RibbonButton icon={bigIcons.tagRoom} lines={["Tag", "Room"]} w="w-[56px]" side />
                <div className="ml-2 flex flex-col pt-1">
                    <SmallButton icon={smallIcons.area} label="Area " arrow />
                    <SmallButton icon={smallIcons.areaBoundary} label="Area  Boundary" disabled />
                    <SmallButton icon={smallIcons.tagArea} label="Tag  Area " arrow />
                </div>
            </Panel>
            <Panel title="Opening" w="w-[180px]" pad="pl-px">
                <RibbonButton icon={bigIcons.byFace} lines={["By", "Face"]} w="w-[46px]" />
                <RibbonButton icon={bigIcons.shaft} lines={["Shaft"]} w="w-[46px]" />
                <div className="ml-1 flex flex-col pt-1">
                    <SmallButton icon={smallIcons.openingWall} label="Wall" />
                    <SmallButton icon={smallIcons.openingVertical} label="Vertical" />
                    <SmallButton icon={smallIcons.dormer} label="Dormer" />
                </div>
            </Panel>
            <Panel title="Datum" w="w-[76px]" pad="pl-2">
                <div className="flex flex-col pt-[18px]">
                    <SmallButton icon={smallIcons.level} label="Level" disabled />
                    <SmallButton icon={smallIcons.grid} label="Grid" disabled />
                </div>
            </Panel>
            <Panel title="Work Plane" w="w-[163px]" pad="pl-1">
                <RibbonButton icon={bigIcons.set} lines={["Set"]} w="w-[42px]" arrow />
                <div className="ml-2 flex flex-col pt-1">
                    <SmallButton icon={smallIcons.show} label="Show" />
                    <SmallButton icon={smallIcons.refPlane} label="Ref  Plane" disabled />
                    <SmallButton icon={smallIcons.viewer} label="Viewer" />
                </div>
            </Panel>
        </div>
    );
}

/* ---------- properties ---------- */

type Prop =
    | { kind: "group"; name: string }
    | { kind: "text" | "edit" | "check" | "input"; name: string; value?: string; disabled?: boolean };

const props: Prop[] = [
    { kind: "group", name: "Graphics" },
    { kind: "input", name: "View Scale", value: "1 : 50" },
    { kind: "text", name: "Scale Value    1:", value: "50", disabled: true },
    { kind: "text", name: "Detail Level", value: "Medium" },
    { kind: "text", name: "Parts Visibility", value: "Show Original" },
    { kind: "edit", name: "Visibility/Graphics Overri...", value: "Edit..." },
    { kind: "edit", name: "Graphic Display Options", value: "Edit..." },
    { kind: "text", name: "Discipline", value: "Architectural" },
    { kind: "text", name: "Show Hidden Lines", value: "By Discipline" },
    { kind: "text", name: "Default Analysis Display ...", value: "None" },
    { kind: "edit", name: "Show Grids", value: "Edit..." },
    { kind: "check", name: "Sun Path" },
    { kind: "group", name: "Extents" },
    { kind: "check", name: "Crop View" },
    { kind: "check", name: "Crop Region Visible" },
    { kind: "check", name: "Annotation Crop" },
    { kind: "check", name: "Far Clip Active" },
    { kind: "text", name: "Far Clip Offset", value: "500.00000", disabled: true },
    { kind: "text", name: "Scope Box", value: "None" },
    { kind: "check", name: "Section Box" },
    { kind: "group", name: "Camera" },
    { kind: "edit", name: "Rendering Settings", value: "Edit..." },
    { kind: "check", name: "Locked Orientation", disabled: true },
    { kind: "text", name: "Projection Mode", value: "Orthographic" },
    { kind: "text", name: "Eye Elevation", value: "20.28140" },
    { kind: "text", name: "Target Elevation", value: "20.00000" },
    { kind: "text", name: "Camera Position", value: "Adjusting", disabled: true },
    { kind: "group", name: "Identity Data" },
    { kind: "edit", name: "View Template", value: "<None>" },
];

function PropRow({ p }: { p: Prop }) {
    if (p.kind === "group") {
        return (
            <tr className="bg-[#e8e8e8] odd:h-[23px] even:h-6">
                <th colSpan={3} scope="colgroup" className="p-0 pl-0.5 text-left font-bold text-[#2d2d2d]">
                    <div className="flex items-start justify-between pr-0.5">
                        <span className="leading-5">{p.name}</span>
                        <svg width="6" height="6" viewBox="0 0 6 6" fill="none" stroke="#555" aria-hidden="true"><path d="M1 2l2-1.500L5 2M1 5l2-1.500L5 5" /></svg>
                    </div>
                </th>
            </tr>
        );
    }
    const id = p.name.toLowerCase().replace(/[^a-z]+/g, "-");
    const tone = p.disabled ? "text-[#8c8c8c]" : "text-[#1c1c1c]";
    return (
        <tr className={`border-b border-[#efefef] odd:h-[23px] even:h-6 ${tone}`}>
            <td className="border-r border-[#efefef] p-0 pb-[3px] pl-[9px] whitespace-pre"><label htmlFor={id}>{p.name}</label></td>
            <td className="border-r border-[#efefef] p-0">
                {p.kind === "text" && <output id={id} className="block pb-[3px] pl-px">{p.value}</output>}
                {p.kind === "input" && <input id={id} defaultValue={p.value} className="block h-[23px] w-full border border-[#777] bg-white pb-0.5 pl-1" />}
                {p.kind === "edit" && <button id={id} type="button" className="block h-[22px] w-full border border-[#d8d8d8] bg-[#f4f4f4] pt-px leading-5 text-[#444]">{p.value}</button>}
                {p.kind === "check" && (
                    <input id={id} type="checkbox" disabled={p.disabled} className="mb-1 ml-px block size-[15px] appearance-none border-2 border-[#8a8a8a] bg-white disabled:border-[#cfcfcf]" />
                )}
            </td>
            <td className="p-0" />
        </tr>
    );
}

function Properties() {
    return (
        <aside className="flex w-[390px] shrink-0 flex-col border-r-2 border-[#bdbdbd] bg-[#ececec] pr-[3px] pl-[3px]">
            <div className="flex h-5 shrink-0 items-center justify-between bg-[#d9d9d9] pr-px pl-px text-[13px] text-[#444]">
                <h2>Properties</h2>
                <button type="button" aria-label="Close properties"><Cross /></button>
            </div>
            <button type="button" className="flex h-[86px] shrink-0 items-center border-y border-[#555] bg-[#f5f5f5] pr-2.5 pl-1 text-[13px] text-[#444]">
                <span className="mr-[5px] flex size-[78px] items-center justify-center border border-[#b5b5b5]"><HouseIcon size={39} /></span>
                3D View
                <svg width="9" height="5" viewBox="0 0 9 5" fill="#999" aria-hidden="true" className="ml-auto"><path d="M0 0h9L4.500 5z" /></svg>
            </button>
            <div className="flex h-7 shrink-0 items-center bg-[#f5f5f5] text-[13px] text-[#444]">
                <div className="flex h-[26px] w-[309px] items-center border-b border-[#c9c9c9] pr-1.5">
                    <select aria-label="View type" className="min-w-0 flex-1 appearance-none bg-transparent pl-[3px]">
                        <option>3D View: Model Lines from Point Cloud</option>
                    </select>
                    <Chevron dir="down" small />
                </div>
                <button type="button" className="ml-px flex flex-1 items-center whitespace-nowrap">
                    <svg width="10" height="10" viewBox="0 0 10 10" fill="none" stroke="#777" aria-hidden="true"><path d="M1 3l2-2h6v6l-2 2H1zM1 3h6v6M4 1v8M1 6h6" /></svg>
                    <span className="ml-0.5">Edit Type</span>
                </button>
            </div>
            <div className="flex min-h-0 flex-1">
                <div className="min-w-0 flex-1 overflow-hidden bg-[#fdfdfd]">
                    <table className="w-full table-fixed border-collapse text-[13px] leading-[18px]">
                        <colgroup>
                            <col className="w-[174px]" />
                            <col />
                            <col className="w-[14px]" />
                        </colgroup>
                        <tbody>
                            {props.map((p) => <PropRow key={p.name} p={p} />)}
                        </tbody>
                    </table>
                </div>
                <div className="flex w-5 flex-col items-center bg-[#ebebeb]">
                    <button type="button" aria-label="Scroll up" className="flex h-[19px] w-full items-center justify-center border-b border-[#d5d5d5]"><Chevron dir="up" /></button>
                    <div className="h-[73.5%] w-[9px] rounded-full bg-[#8a8a8a]" />
                    <button type="button" aria-label="Scroll down" className="mt-auto flex h-5 w-full items-center justify-center border-t border-[#d5d5d5]"><Chevron dir="down" /></button>
                </div>
            </div>
            <div className="flex h-[30px] shrink-0 items-center gap-0.5 bg-[#ebeded] pr-0.5 pb-1 pl-px">
                <button type="button" aria-label="Sort by group" className="flex h-[26px] w-[25px] items-center justify-center rounded-xs bg-[#7ccbef]">
                    <Ico><path d="M3 5h6M3 8h5M3 11h11M3 14h6M16 4v5M16 11v5" stroke="#333" strokeWidth="1.500" /><path d="M16 2l3 4h-6zM16 18l3-4h-6z" fill="#333" stroke="none" /></Ico>
                </button>
                {[["A", "Z"], ["Z", "A"]].map(([a, b]) => (
                    <button key={a} type="button" aria-label={`Sort ${a} to ${b}`} className="flex h-[26px] w-[25px] items-center justify-center gap-1 bg-[#f3f3f3]">
                        <span className="flex flex-col font-[Liberation_Sans,sans-serif] text-[10px] leading-[11px]">
                            <span className={a === "A" ? "text-[#3595e8]" : "text-[#666]"}>{a}</span>
                            <span className={b === "A" ? "text-[#3595e8]" : "text-[#666]"}>{b}</span>
                        </span>
                        <svg width="6" height="16" viewBox="0 0 6 16" stroke="#444" strokeWidth="1.400" aria-hidden="true"><path d="M3 0v12" /><path d="M0 11h6l-3 5z" fill="#444" stroke="none" /></svg>
                    </button>
                ))}
                <button type="button" disabled className="ml-auto h-[25px] w-[87px] rounded-xs border border-[#dcdcdc] bg-[#eff0f0] text-[13px] text-[#a8a8a8]">Apply</button>
            </div>
        </aside>
    );
}

/* ---------- drawing area ---------- */

const viewControls: { label: string; icon: ReactNode }[] = [
    { label: "Detail level", icon: <Ico><path d="M1 3h18v14H1z" fill="#e4e4e4" strokeWidth="1.800" /><path d="M2 4h5v4H2zM13 4h5v4h-5zM7 8h6v4H7zM2 12h5v4H2zM13 12h5v4h-5z" fill="#999" stroke="none" /></Ico> },
    { label: "Visual style", icon: <Ico><path d="M2 7l5-5h11v12l-5 5H2zM2 7h11v12M13 7l5-5" fill="#fafafa" strokeWidth="1.500" /></Ico> },
    { label: "Sun path", icon: <Ico><circle cx="8" cy="8" r="4.500" fill="#e2a855" stroke="none" /><path d="M8 0v3M0 8h3M2 2l2 2M14 2l-2 2M2 14l2-2M8 13v3" stroke="#e2a855" strokeWidth="1.600" /><Bulb /></Ico> },
    { label: "Shadows", icon: <Ico><circle cx="8" cy="7" r="6.500" fill="#e6e6e6" /><path d="M1 17h10" stroke="#aaa" strokeWidth="2.500" /><Bulb /></Ico> },
    { label: "Rendering", icon: <Ico><path d="M1 5l3 2c1 5 3 8 6 8s6-3 6-8l3-3M5 5c3-3 8-3 10 0M5 6h11M9 2h2" fill="#f4f4f4" /><Bulb /></Ico> },
    { label: "Crop view", icon: <Ico><path d="M6 18V5h13" strokeWidth="2.500" /><path d="M14 0v4M0 14h4" stroke="#2c7fd4" strokeWidth="2.500" /><path d="M11 11l7 8M18 11l-7 8" stroke="#8b3f1c" strokeWidth="2.200" /></Ico> },
    { label: "Crop region", icon: <Ico><path d="M6 18V5h13" strokeWidth="2.500" /><path d="M14 0v4M0 14h4" stroke="#2c7fd4" strokeWidth="2.500" /><Bulb /></Ico> },
    { label: "Lock 3D view", icon: <Ico><path d="M1 10l8-9 9 8" fill="none" stroke="#666" strokeWidth="2.500" /><path d="M4 9v9h7V11" /><path d="M10 11h7v7h-7zM15 11V8h4v3" fill="#d9f1fb" stroke="#3b9cd6" strokeWidth="1.500" /></Ico> },
    { label: "Temporary hide/isolate", icon: <span className="flex size-5 items-center justify-center border border-[#3f93d8] bg-[#e9f3fb]"><Ico size={18}><circle cx="5" cy="11.500" r="3" /><circle cx="13" cy="11.500" r="3" /><path d="M8 11h2M2 11l2-6M16 11l-2-6" /></Ico></span> },
    { label: "Reveal hidden", icon: <Ico><circle cx="10" cy="7" r="4.500" fill="#5fdcf2" stroke="#4aa3c4" /><path d="M8 13.500h4M8.500 16h3" stroke="#555" strokeWidth="2" /></Ico> },
    { label: "View properties", icon: <Ico><path d="M3 3h11v4M3 3v10h4M6 7h4v3H6z" /><path d="M9 9h9v9H9z" strokeDasharray="3 2" /></Ico> },
    { label: "Analytical model", icon: <Ico><path d="M2 6l4-5h12v10M2 6h12v12M2 6v12M6 1v12M10 6V1M2 11h15" /><path d="M6 12v6M10 12v6" stroke="#e2a855" /><Bulb /></Ico> },
    { label: "Displacement", icon: <Ico><path d="M7 7l4-4h7v7l-4 4" fill="#9cc8ea" stroke="#3b7db3" /><path d="M5 8h8v8H5z" fill="#fff" strokeWidth="1.800" /><path d="M2 8v8M17 13l-3 4" stroke="#4f93c8" strokeDasharray="2 1" /></Ico> },
    { label: "Constraints", icon: <Ico><path d="M2 1v14M16 1v6M2 4h14" strokeWidth="1.500" /><path d="M2 14h10" strokeDasharray="2 2" strokeWidth="1.500" /><Bulb /></Ico> },
];

function ViewCube() {
    return (
        <svg width="64" height="76" viewBox="0 0 64 76" aria-label="View cube" className="absolute top-[28px] right-[34px]">
            <path d="M5 1h53l5 30H1z" fill="#dfdfdf" stroke="#b5b5b5" />
            <path d="M1 31h62l-3 44H5z" fill="#d5d5d5" stroke="#b0b0b0" />
            <path d="M13 27h38v13H13z" fill="#cdcdcd" />
            <path d="M1 31h62" stroke="#8e8e8e" />
            <text x="32" y="18" textAnchor="middle" fontSize="10" fontWeight="bold" fill="#8f8f8f" fontFamily="DejaVu Sans, sans-serif">FRONT</text>
            <text x="32" y="54" textAnchor="middle" fontSize="13" fontWeight="bold" fill="#989898" fontFamily="Open Sans, sans-serif" transform="rotate(180 32 54)" dy="4">BOTTOM</text>
        </svg>
    );
}

function NavBar() {
    return (
        <div className="absolute top-[132px] right-0 flex h-[126px] w-[35px] flex-col items-center rounded-l-xs border border-[#cfcfcf] bg-[#f6f6f6]">
            <button type="button" aria-label="Close navigation bar" className="self-end">
                <Ico size={12}><circle cx="6" cy="6" r="4" fill="#ddd" stroke="#b0b0b0" /><path d="M4.500 4.500l3 3M7.500 4.500l-3 3" stroke="#888" strokeWidth="1" /></Ico>
            </button>
            <button type="button" aria-label="Steering wheel" className="mt-1">
                <Ico size={32}>
                    <path d="M5 13C5 6 9 3 15 3h10v12c0 5-4 9-10 9S5 19 5 13z" fill="#f6f6f6" stroke="#a5a5a5" strokeWidth="1.600" />
                    <circle cx="15" cy="14" r="5.500" stroke="#a5a5a5" strokeWidth="1.400" />
                    <path d="M7 22l4-4M19 10l5-5" stroke="#a5a5a5" />
                    <path d="M20 19l3-3h8v9l-3 3h-8z" fill="#b7dbf3" stroke="#6ea9d0" />
                </Ico>
            </button>
            <Caret className="mt-1 text-[#777]" />
            <span className="mt-1.5 h-px w-full bg-[#dcdcdc]" />
            <button type="button" aria-label="Zoom region" className="mt-2">
                <Ico>
                    <path d="M1 2h13v13H1z" stroke="#999" />
                    <circle cx="13" cy="13" r="3.500" fill="#f6f6f6" stroke="#8a8a8a" />
                    <path d="M15.500 15.500l4 4" stroke="#8a8a8a" strokeWidth="2" />
                </Ico>
            </button>
            <Caret className="mt-2.5 text-[#888]" />
            <button type="button" aria-label="Navigation bar options" className="mt-auto self-end">
                <Ico size={12}><circle cx="6" cy="6" r="4" fill="#eee" stroke="#b0b0b0" /><path d="M4 6h4" stroke="#888" /></Ico>
            </button>
        </div>
    );
}

function DrawingArea() {
    return (
        <main className="flex min-w-0 flex-1 flex-col bg-[#f5f5f5]">
            <div className="flex h-6 shrink-0 items-end bg-[#cbcbcb] text-[13px] text-[#555]">
                <button type="button" className="flex h-[23px] w-[151px] items-center gap-2 pl-1.5"><HouseIcon size={18} faded />{"{3D}"}</button>
                <button type="button" className="flex h-[23px] w-[218px] items-center gap-2 pl-1.5 whitespace-nowrap"><HouseIcon size={18} faded />Perspective entire Facade</button>
                <div className="flex h-[23px] items-center bg-white pr-[5px] pl-1.5">
                    <button type="button" className="flex items-center gap-2.5 font-bold whitespace-nowrap text-[#444]"><HouseIcon size={18} />Model Lines from Point Cloud</button>
                    <button type="button" aria-label="Close view" className="ml-2"><Cross className="text-[#888]" /></button>
                </div>
                <button type="button" aria-label="View list" className="mr-[7px] mb-2 ml-auto">
                    <svg width="10" height="8" viewBox="0 0 10 8" fill="#777" aria-hidden="true"><path d="M0 0h10v1.500H0zM0 3.500h10L5 8z" /></svg>
                </button>
            </div>
            <div className="flex min-h-0 flex-1 pt-0.5 pr-[3px] pl-[3px]">
                <div className="relative min-w-0 flex-1 border-2 border-[#1de4f2] bg-[#fefefe]">
                    <span className="block w-fit bg-[#00f0ff] pr-[3px] font-[Liberation_Sans,sans-serif] text-[15px] leading-[18px] font-bold text-[#111]">Temporary Hide/Isolate</span>
                    <ViewCube />
                    <NavBar />
                </div>
                <div className="relative flex w-5 flex-col items-center justify-between bg-[#ebebeb]">
                    <button type="button" aria-label="Scroll view up" className="flex h-5 w-full items-center justify-center border-b border-[#d5d5d5]"><Chevron dir="up" /></button>
                    <div className="h-[21px] w-[10px] rounded-full bg-[#8a8a8a]" />
                    <button type="button" aria-label="Scroll view down" className="flex h-5 w-full items-center justify-center border-t border-[#d5d5d5]"><Chevron dir="down" /></button>
                </div>
            </div>
            <div className="mb-[3px] flex h-5 shrink-0 items-center pr-[3px] pl-[3px]">
                <button type="button" className="w-[91px] pl-1 text-center text-[13px] text-[#333]">1 : 50</button>
                <div className="flex w-[413px]">
                    {viewControls.map((c) => (
                        <button key={c.label} type="button" aria-label={c.label} className="flex flex-1 justify-center">{c.icon}</button>
                    ))}
                </div>
                <div className="-ml-px flex h-5 flex-1 items-center justify-between bg-[#ebebeb]">
                    <button type="button" aria-label="Scroll view left" className="flex h-5 w-5 items-center justify-center border-r border-[#d5d5d5]"><Chevron dir="left" /></button>
                    <div className="h-[10px] w-5 rounded-full bg-[#8a8a8a]" />
                    <button type="button" aria-label="Scroll view right" className="flex h-5 w-5 items-center justify-center border-l border-[#d5d5d5]"><Chevron dir="right" /></button>
                </div>
                <svg width="20" height="20" viewBox="0 0 20 20" fill="#888" aria-hidden="true"><path d="M13 8h3v3h-3zM13 13h3v3h-3zM8 13h3v3H8z" /></svg>
            </div>
        </main>
    );
}

/* ---------- project browser ---------- */

type Node = { label: string; group?: boolean; last?: boolean; active?: boolean };

const tree: Node[] = [
    { label: "R1.4" },
    { label: "R10" },
    { label: "R10K1" },
    { label: "R10K2" },
    { label: "R10K3" },
    { label: "Site" },
    { label: "Site and Grids" },
    { label: "Site C5", last: true },
    { label: "Ceiling Plans", group: true },
    { label: "R8" },
    { label: "R9", last: true },
    { label: "3D Views", group: true },
    { label: "All" },
    { label: "FilterByFamilyName" },
    { label: "Model Lines from Point Cloud", active: true },
    { label: "Model Lines from Point Cloud-Ort" },
    { label: "Muqarnas+ All lines" },
    { label: "Orthographic" },
    { label: "Orthographic + FilterLevel" },
    { label: "Orthographic + Materials" },
    { label: "Perspective" },
    { label: "Perspective entire Facade" },
    { label: "SectionPerspective", last: true },
    { label: "3D Views (Animation B)", group: true },
    { label: "Animation B3a" },
    { label: "Animation B3b" },
    { label: "Animation B4a" },
    { label: "Animation B4b" },
    { label: "Animation B5a" },
    { label: "Animation B5b" },
    { label: "Animation B5c" },
    { label: "Animation B5d" },
];

function TreeRow({ node }: { node: Node }) {
    if (node.group) {
        return (
            <li className="flex shrink-0 items-center odd:h-6 even:h-[23px]">
                <svg width="36" height="24" viewBox="0 0 36 24" fill="none" stroke="#b5b5b5" aria-hidden="true" className="shrink-0">
                    <path d="M9.500 0v24M10 12h9" strokeDasharray="3 2" />
                    <path d="M24 12h10" stroke="#666" strokeWidth="2" />
                </svg>
                <button type="button" className="ml-2 whitespace-nowrap">{node.label}</button>
            </li>
        );
    }
    return (
        <li className={`flex shrink-0 items-center odd:h-6 even:h-[23px] ${node.active ? "bg-[#f3f3f3] font-bold" : ""}`}>
            <svg width="83" height="24" viewBox="0 0 83 24" fill="none" stroke="#b5b5b5" aria-hidden="true" className="shrink-0">
                <path d={node.last ? "M9.500 0v24M28.500 0v12M29 12h29" : "M9.500 0v24M28.500 0v24M29 12h29"} strokeDasharray="3 2" />
                <path d="M63.500 8V3.500H68M70 3.500h5M77 3.500h4.500V8M81.500 10v4M81.500 17v4.500H77M75 21.500h-5M68 21.500h-4.500V17M63.500 14v-4" stroke="#666" strokeWidth="1.400" />
                <path d="M66 6h13v13H66z" fill="#fff" stroke="#7d7d7d" strokeWidth="1.400" />
            </svg>
            <button type="button" className="ml-1 overflow-hidden whitespace-nowrap">{node.label}</button>
        </li>
    );
}

const browserTabs: { label: string; icon: ReactNode }[] = [
    { label: "Views", icon: <Ico><path d="M0 11l9-9 9 9M3 9v9h4M14 2v4" strokeWidth="1.600" /><path d="M10 11v7M10 13h8M14 13v5" stroke="#a5643a" strokeWidth="1.500" /><path d="M15 15h4v4h-4z" fill="#2c86d4" stroke="none" /></Ico> },
    { label: "Sheets", icon: <Ico><path d="M1 5V1h4M15 1h4v4M19 15v4h-4M5 19H1v-4" strokeWidth="1.600" /><path d="M5 8l3-3h7v7l-3 3H5z" fill="#ddd" strokeWidth="1.500" /></Ico> },
    { label: "Legends", icon: <Ico><path d="M1 1h18v18H1z" fill="#eee" strokeWidth="1.500" /><path d="M1 3h18" strokeWidth="3" stroke="#555" /><path d="M4 8h3v3H4zM4 13h3v3H4z" /><path d="M9 8h3M13 8h4M9 10.500h8M9 13.500h3M13 13.500h4M9 16h8" /></Ico> },
    { label: "Schedules", icon: <Ico><path d="M1 3h18v14H1z" fill="#eee" /><path d="M1 4.500h18" strokeWidth="3.500" stroke="#555" /><path d="M1 9h18M1 13h18M6 6v11M12 6v11" strokeWidth="1.400" /></Ico> },
    { label: "Drawings", icon: <Ico><path d="M1 4v13h14M1 4h6" fill="#eee" stroke="#eee" /><path d="M1 17h14M1 12h5" stroke="#666" /><path d="M7 3c2-2 4-1 5 1l7 9c1 3-2 5-4 3L7 7c-1-1-1-3 0-4z" fill="#f0f0f0" strokeWidth="1.500" /><circle cx="16" cy="14.500" r="2" /></Ico> },
    { label: "Families", icon: <Ico><path d="M2 2h7v7H2zM12 2h6v16H2v-6h10z" fill="#eee" strokeWidth="1.600" /></Ico> },
    { label: "Groups", icon: <Ico><path d="M5 1H1.500v18H5M15 1h3.500v18H15" strokeWidth="1.800" /><circle cx="9" cy="8" r="4.500" /><path d="M8 10l2-2h6v6l-2 2H8z" fill="#ddd" /></Ico> },
    { label: "Links", icon: <Ico><path d="M9 9c-1-2 1-3 2-4l3-2c3-1 5 2 3 4l-4 4c-1 1-3 1-4 0M11 10c1 2-1 3-2 4l-3 2c-3 1-5-2-3-4l4-4c1-1 3-1 4 0" stroke="#e2a14a" strokeWidth="1.500" /></Ico> },
];

function ProjectBrowser() {
    return (
        <aside className="flex w-[327px] shrink-0 flex-col border-l-[3px] border-[#bdbdbd] bg-[#fefefe]">
            <div className="flex h-5 shrink-0 items-center justify-between bg-[#d9d9d9] pr-[3px] pl-0.5 text-[13px] text-[#444]">
                <h2 className="whitespace-nowrap">Project Browser - Isfahan Mosque Muqarnas</h2>
                <button type="button" aria-label="Close project browser"><Cross /></button>
            </div>
            <div className="flex h-7 shrink-0 bg-[#cbcbcb] pl-0.5">
                {browserTabs.map((t, i) => (
                    <button key={t.label} type="button" aria-label={t.label} className={`flex w-[28px] items-center justify-center ${i === 0 ? "rounded-t-sm bg-white" : ""}`}>{t.icon}</button>
                ))}
            </div>
            <label className="mx-[11px] mt-[10px] mb-[9px] flex h-[30px] shrink-0 items-center border border-[#e5e5e5] bg-white pl-2">
                <Ico><circle cx="8" cy="8" r="6.500" stroke="#7d7d7d" strokeWidth="2" /><path d="M12.500 12.500l6 6" stroke="#7d7d7d" strokeWidth="2.600" /></Ico>
                <input type="search" aria-label="Search" placeholder="Search" className="ml-[9px] min-w-0 flex-1 text-[13px] outline-none placeholder:text-[#9a9a9a]" />
            </label>
            <div className="flex min-h-0 flex-1 border-b-[3px] border-[#f3f3f3]">
                <ul className="flex min-w-0 flex-1 flex-col justify-end overflow-hidden pb-0.5 pl-0.5 text-[13px] text-[#1f1f1f]">
                    {tree.map((n) => <TreeRow key={n.label} node={n} />)}
                </ul>
                <div className="mr-0.5 flex w-[21px] flex-col items-center bg-[#ebebeb]">
                    <button type="button" aria-label="Scroll tree up" className="flex h-5 w-full items-center justify-center border-b border-[#d5d5d5]"><Chevron dir="up" /></button>
                    <div className="mt-[72px] h-12 w-[9px] rounded-full bg-[#8a8a8a]" />
                    <button type="button" aria-label="Scroll tree down" className="mt-auto flex h-5 w-full items-center justify-center border-t border-[#d5d5d5]"><Chevron dir="down" /></button>
                </div>
            </div>
        </aside>
    );
}

/* ---------- status bar ---------- */

const statusIcons: { label: string; icon: ReactNode }[] = [
    { label: "Select links", icon: <Ico><path d="M9 4C8 2 2 2 2 5s5 3 6 1l3-2c2-2 7-1 7 1s-4 3-6 1" stroke="#e2a14a" strokeWidth="1.600" /><CursorMark /></Ico> },
    { label: "Select underlay", icon: <Ico><path d="M3 11l7-9v9zM1 15l4-3h6v4H1z" fill="#3f8fce" stroke="none" /><path d="M12 1l6 6M18 1l-6 6" stroke="#9c4a1f" strokeWidth="2" /><CursorMark /></Ico> },
    { label: "Select pinned", icon: <Ico><path d="M2 2h9M4 2v6M9 2v6M2 9h9M6.500 9v7" strokeWidth="1.600" /><CursorMark /></Ico> },
    { label: "Select by face", icon: <Ico><path d="M2 5l10-4v13L2 18z" fill="#4f9bd4" stroke="#3b7db3" /><CursorMark /></Ico> },
    { label: "Drag on selection", icon: <Ico><path d="M8 1v15M1 8.500h15" stroke="#333" strokeWidth="1.600" /><path d="M8 0l3 3.500H5zM8 17l3-3.500H5zM0 8.500l3.500-3v6z" fill="#333" stroke="none" /><CursorMark /></Ico> },
    { label: "Background processes", icon: <Ico><circle cx="10" cy="10" r="7.500" stroke="#b5b5b5" strokeWidth="2.800" strokeDasharray="0 5.890" strokeLinecap="round" /></Ico> },
];

function StatusBar() {
    return (
        <footer className="flex h-[29px] shrink-0 items-center bg-[#f4f4f4] pr-5 pl-0.5 text-[13px] text-[#444]">
            <p className="w-[758px] whitespace-nowrap">Click to select, TAB for alternates, CTRL adds, SHIFT unselects.</p>
            <button type="button" aria-label="Worksets">
                <Ico>
                    <path d="M2 4c0-3 6-3 6 0v9H2z" fill="#3f8fce" stroke="#3b7db3" />
                    <path d="M10 3c0-2 6-2 6 0v6h-6z" fill="#e2a855" stroke="#b7843c" />
                    <path d="M7 8c0-2 6-2 6 0v9c0 2-6 2-6 0z" fill="#555" stroke="#eee" />
                    <path d="M12 17l6-6M16 10l3 3" stroke="#2c86d4" strokeWidth="2" />
                </Ico>
            </button>
            <label className="ml-1 flex h-[22px] w-[237px] items-center justify-end border-b border-[#dcdcdc] text-[#b5b5b5]">
                <select aria-label="Active workset" className="min-w-0 flex-1 appearance-none"><option /></select>
                <Chevron dir="down" small className="text-[#b5b5b5]" />
            </label>
            <button type="button" className="ml-2.5 flex w-5 items-end text-[#888]">
                <Ico size={14} h={20}><path d="M6 1h7v5h-3L8 8V6H6z" /><circle cx="5" cy="10.500" r="2.500" /><path d="M1 18c0-3 2-4.500 4-4.500S9 15 9 18z" /></Ico>
                <span className="-ml-1 leading-4">:0</span>
            </button>
            <button type="button" aria-label="Design options" className="ml-[19px]">
                <Ico><path d="M1 1h18v18H1z" fill="#f4f4f4" strokeWidth="1.600" /><path d="M1 2.500h18" stroke="#555" strokeWidth="3" /><path d="M4 7h2M8 7h9M4 10h2M8 10h9M4 13h2M8 13h9M4 16h2M8 16h9" stroke="#555" /></Ico>
            </button>
            <button type="button" aria-label="Add to set" className="ml-1.5">
                <Ico className="opacity-60"><path d="M3 13V1h16v17h-9" strokeWidth="1.500" /><path d="M3 2.500h16" strokeWidth="2.500" /><path d="M6 6h2M10 6h7M6 9h2M10 9h7M6 12h2M10 12h7" /><path d="M1 16h6v-3l5 4-5 3v-2H1z" fill="#888" stroke="none" /></Ico>
            </button>
            <label className="ml-[3px] flex h-[22px] w-[243px] items-center border-b border-[#dcdcdc] pr-[7px] pl-1 text-[#a5a5a5]">
                <select aria-label="Design option" className="min-w-0 flex-1 appearance-none"><option>Main Model</option></select>
                <Chevron dir="down" small className="text-[#b5b5b5]" />
            </label>
            <div className="ml-auto flex items-center gap-[5px]">
                {statusIcons.map((s) => <button key={s.label} type="button" aria-label={s.label}>{s.icon}</button>)}
                <button type="button" className="flex items-center">
                    <Ico><path d="M1 2h18l-7 8v9H8v-9z" fill="#ddd" stroke="#555" /></Ico>
                    :0
                </button>
            </div>
        </footer>
    );
}

export default function App() {
    return (
        <div className="flex h-screen flex-col overflow-hidden bg-[#d9d9d9] font-[Noto_Sans,Open_Sans,sans-serif]">
            <TitleBar />
            <RibbonTabs />
            <Ribbon />
            <div className="h-[33px] shrink-0 border-b-2 border-[#c4c4c4] bg-[#f5f5f5]" />
            <div className="flex min-h-0 flex-1">
                <Properties />
                <DrawingArea />
                <ProjectBrowser />
            </div>
            <StatusBar />
            <div className="h-2 shrink-0 border-t-2 border-[#bcbec2] bg-linear-to-r from-[#d9e8f7] via-[#d3daf0] to-[#dcebf7]" />
        </div>
    );
}
